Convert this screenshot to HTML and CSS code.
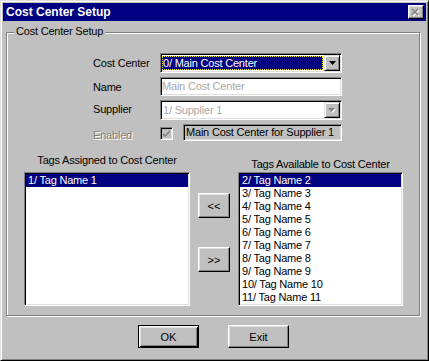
FILE: index.html
```html
<!doctype html>
<html lang="en">
<head>
	<meta charset="UTF-8">
	<title>Cost Center Setup</title>
	<link rel="stylesheet" href="styles.css">
</head>
<body>
	<div class="window">
		<div class="titlebar">
			<span class="title">Cost Center Setup</span>
			<span class="close-btn">
				<svg width="10" height="9" viewBox="0 0 10 9">
					<path d="M2 2l6 6M8 2l-6 6" stroke="#fff" stroke-width="1.6"/>
					<path d="M1 1l6 6M7 1l-6 6" stroke="#808080" stroke-width="1.6"/>
				</svg>
			</span>
		</div>

		<div class="group">
			<span class="group-label">Cost Center Setup</span>

			<div class="form">
				<span class="field-label">Cost Center</span>
				<div class="combo">
					<span class="combo-value selected">0/ Main Cost Center</span>
					<span class="drop-btn">
						<svg width="7" height="4" viewBox="0 0 7 4"><polygon points="0,0 7,0 3.5,4" fill="#000"/></svg>
					</span>
				</div>

				<span class="field-label">Name</span>
				<div class="edit disabled-text">Main Cost Center</div>

				<span class="field-label supplier">Supplier</span>
				<div class="combo">
					<span class="combo-value disabled-text">1/ Supplier 1</span>
					<span class="drop-btn">
						<svg width="8" height="5" viewBox="0 0 8 5">
							<polygon points="1,1 8,1 4.5,5" fill="#fff"/>
							<polygon points="0,0 7,0 3.5,4" fill="#808080"/>
						</svg>
					</span>
				</div>

				<span class="field-label embossed">Enabled</span>
				<div class="enabled-row">
					<span class="checkbox">
						<svg width="9" height="9" viewBox="0 0 9 9"><path d="M1 4l2 2 5-5v2l-5 5-2-2z" fill="#808080"/></svg>
					</span>
					<div class="readonly">Main Cost Center for Supplier 1</div>
				</div>
			</div>

			<div class="lists">
				<div class="list-label left">Tags Assigned to Cost Center</div>
				<div></div>
				<div class="list-label right">Tags Available to Cost Center</div>

				<div class="listbox">
					<div class="item selected">1/ Tag Name 1</div>
				</div>
				<div class="mover">
					<button class="btn small">&lt;&lt;</button>
					<button class="btn small">&gt;&gt;</button>
				</div>
				<div class="listbox">
					<div class="item selected">2/ Tag Name 2</div>
					<div class="item">3/ Tag Name 3</div>
					<div class="item">4/ Tag Name 4</div>
					<div class="item">5/ Tag Name 5</div>
					<div class="item">6/ Tag Name 6</div>
					<div class="item">7/ Tag Name 7</div>
					<div class="item">8/ Tag Name 8</div>
					<div class="item">9/ Tag Name 9</div>
					<div class="item">10/ Tag Name 10</div>
					<div class="item">11/ Tag Name 11</div>
				</div>
			</div>
		</div>

		<div class="actions">
			<button class="btn wide default">OK</button>
			<button class="btn wide">Exit</button>
		</div>
	</div>
</body>
</html>
```

FILE: styles.css
```css
*{
	margin:0;
	padding:0;
	box-sizing:border-box;
}

body{
	background:#c0c0c0;
	font-family:"Liberation Sans", Arial, sans-serif;
	font-size:11px;
	letter-spacing:-0.2px;
	color:#000;
}

/* outer window frame */
.window{
	width:429px;
	height:361px;
	padding:2px;
	background:#c0c0c0;
	border:1px solid;
	border-color:#dfdfdf #000 #000 #dfdfdf;
	box-shadow:inset 1px 1px #fff, inset -1px -1px #808080;
}

.titlebar{
	display:flex;
	align-items:center;
	justify-content:space-between;
	height:18px;
	padding:0 2px 0 3px;
	background:#000080;
}

.title{
	color:#fff;
	font-weight:bold;
	font-size:12px;
	letter-spacing:0;
}

.close-btn{
	display:flex;
	align-items:center;
	justify-content:center;
	width:16px;
	height:14px;
	background:#c0c0c0;
	border:1px solid;
	border-color:#fff #000 #000 #fff;
	box-shadow:inset -1px -1px #808080, inset 1px 1px #dfdfdf;
}

/* etched group box */
.group{
	position:relative;
	margin:11px 6px 0 3px;
	padding:20px 0 9px 0;
	border:1px solid #808080;
	box-shadow:inset 1px 1px #fff, 1px 1px #fff;
}

.group-label{
	position:absolute;
	top:-8px;
	left:7px;
	padding:0 2px;
	line-height:13px;
	background:#c0c0c0;
}

.form{
	display:grid;
	grid-template-columns:67px 182px;
	grid-template-rows:20px 19px 20px 17px;
	row-gap:4px;
	margin-left:86px;
}

.field-label{
	align-self:center;
}

.field-label.supplier{
	padding-bottom:3px;
}

.embossed{
	color:#808080;
	text-shadow:1px 1px #fff;
	padding-top:4px;
}

.disabled-text{
	color:#a8a8a8;
}

/* sunken controls */
.combo, .edit, .readonly, .listbox, .checkbox{
	border:1px solid;
	border-color:#808080 #fff #fff #808080;
	box-shadow:inset 1px 1px #000, inset -1px -1px #dfdfdf;
	padding:1px;
}

.combo{
	display:flex;
	background:#fff;
}

.combo-value{
	flex:1;
	padding-left:1px;
	line-height:16px;
	white-space:nowrap;
}

.combo-value.selected{
	margin:1px 1px 1px 0;
	line-height:14px;
	background:#000080;
	color:#fff;
	outline:1px dotted #ff0;
	outline-offset:-1px;
}

.drop-btn{
	display:flex;
	align-items:center;
	justify-content:center;
	width:16px;
	background:#c0c0c0;
	border:1px solid;
	border-color:#dfdfdf #000 #000 #dfdfdf;
	box-shadow:inset 1px 1px #fff, inset -1px -1px #808080;
}

.edit{
	background:#fff;
	line-height:15px;
}

.enabled-row{
	display:flex;
	gap:10px;
}

.checkbox{
	display:flex;
	align-items:center;
	justify-content:center;
	width:13px;
	height:13px;
	margin-top:3px;
	background:#c0c0c0;
}

.readonly{
	width:159px;
	padding-left:2px;
	line-height:13px;
	background:#c0c0c0;
	white-space:nowrap;
}

/* tag lists */
.lists{
	display:grid;
	grid-template-columns:166px 48px 165px;
	margin:13px 0 0 17px;
}

.list-label{
	justify-self:center;
	line-height:13px;
	white-space:nowrap;
}

.list-label.left{
	margin-bottom:5px;
}

.list-label.right{
	margin-top:4px;
	margin-bottom:1px;
}

.listbox{
	height:134px;
	background:#fff;
}

.item{
	height:13px;
	line-height:13px;
	padding-left:2px;
	white-space:nowrap;
}

.item.selected{
	background:#000080;
	color:#fff;
}

.mover{
	display:flex;
	flex-direction:column;
	align-items:center;
	gap:29px;
	padding-top:21px;
}

.btn{
	font-family:inherit;
	font-size:11px;
	color:#000;
	background:#c0c0c0;
	border:1px solid;
	border-color:#fff #000 #000 #fff;
	box-shadow:inset -1px -1px #808080, inset 1px 1px #dfdfdf;
}

.btn.small{
	width:32px;
	height:25px;
}

.btn.wide{
	width:61px;
	height:23px;
}

.btn.default{
	border-color:#000;
	box-shadow:inset 1px 1px #fff, inset -1px -1px #000, inset 2px 2px #dfdfdf, inset -2px -2px #808080;
}

.actions{
	display:flex;
	justify-content:center;
	gap:29px;
	margin-top:9px;
	padding-right:2px;
}
```
